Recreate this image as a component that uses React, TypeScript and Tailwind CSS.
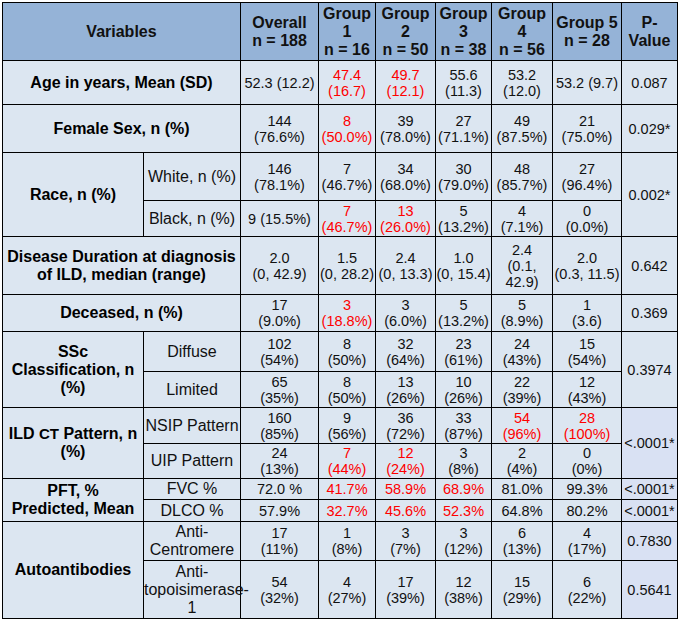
type Cell = {
  lines: string[];
  red?: boolean;
  alt?: boolean;
};

const c = (text: string, red = false): Cell => ({ lines: text.split("|"), red });

const DataCell = ({ cell, rowSpan }: { cell: Cell; rowSpan?: number }) => (
  <td
    rowSpan={rowSpan}
    className={`border border-black text-center align-middle whitespace-nowrap overflow-hidden px-0 text-[14.5px] leading-[16px] ${
      cell.red ? "text-[#ff0000]" : "text-[#111]"
    } ${cell.alt ? "bg-[#d9e1f3]" : ""}`}
  >
    {cell.lines.map((l, i) => (
      <div key={i}>{l}</div>
    ))}
  </td>
);

const Label = ({
  children,
  colSpan,
  rowSpan,
}: {
  children: React.ReactNode;
  colSpan?: number;
  rowSpan?: number;
}) => (
  <td
    colSpan={colSpan}
    rowSpan={rowSpan}
    className="border border-black text-center align-middle font-bold text-[16px] leading-[18px] whitespace-nowrap px-0"
  >
    {children}
  </td>
);

const Sub = ({ children }: { children: React.ReactNode }) => (
  <td className="border border-black text-center align-middle text-[16px] leading-[18px] whitespace-nowrap px-0 text-[#111]">
    {children}
  </td>
);

const groups = (cells: Cell[]) => cells.map((cell, i) => <DataCell key={i} cell={cell} />);

const pv = (text: string, alt = false): Cell => ({ lines: [text], alt });

export default function App() {
  return (
    <div className="w-[678px] h-[622px] bg-white pl-[2px] pt-[2px] overflow-hidden font-['Liberation_Sans',Arial,sans-serif]">
      <table className="table-fixed border-collapse w-[675px] bg-[#dce6f1]">
        <colgroup>
          <col className="w-[141px]" />
          <col className="w-[97px]" />
          <col className="w-[78px]" />
          <col className="w-[57px]" />
          <col className="w-[60px]" />
          <col className="w-[56px]" />
          <col className="w-[61px]" />
          <col className="w-[69px]" />
          <col className="w-[56px]" />
        </colgroup>
        <thead>
          <tr className="h-[58px] bg-[#95b3d7] font-bold text-[16px] leading-[18px] text-[#111]">
            <td colSpan={2} className="border border-black text-center align-middle">Variables</td>
            <td className="border border-black text-center align-middle">Overall<br />n = 188</td>
            <td className="border border-black text-center align-middle whitespace-nowrap">Group<br />1<br />n = 16</td>
            <td className="border border-black text-center align-middle whitespace-nowrap">Group<br />2<br />n = 50</td>
            <td className="border border-black text-center align-middle whitespace-nowrap">Group<br />3<br />n = 38</td>
            <td className="border border-black text-center align-middle whitespace-nowrap">Group<br />4<br />n = 56</td>
            <td className="border border-black text-center align-middle whitespace-nowrap">Group 5<br />n = 28</td>
            <td className="border border-black text-center align-middle">P-<br />Value</td>
          </tr>
        </thead>
        <tbody>
          <tr className="h-[44px]">
            <Label colSpan={2}>Age in years, Mean (SD)</Label>
            {groups([c("52.3 (12.2)"), c("47.4|(16.7)", true), c("49.7|(12.1)", true), c("55.6|(11.3)"), c("53.2|(12.0)"), c("53.2 (9.7)"), pv("0.087")])}
          </tr>
          <tr className="h-[48px]">
            <Label colSpan={2}>Female Sex, n (%)</Label>
            {groups([c("144|(76.6%)"), c("8|(50.0%)", true), c("39|(78.0%)"), c("27|(71.1%)"), c("49|(87.5%)"), c("21|(75.0%)"), pv("0.029*")])}
          </tr>
          <tr className="h-[48px]">
            <Label rowSpan={2}>Race, n (%)</Label>
            <Sub>White, n (%)</Sub>
            {groups([c("146|(78.1%)"), c("7|(46.7%)"), c("34|(68.0%)"), c("30|(79.0%)"), c("48|(85.7%)"), c("27|(96.4%)")])}
            <DataCell rowSpan={2} cell={pv("0.002*")} />
          </tr>
          <tr className="h-[36px]">
            <Sub>Black, n (%)</Sub>
            {groups([c("9 (15.5%)"), c("7|(46.7%)", true), c("13|(26.0%)", true), c("5|(13.2%)"), c("4|(7.1%)"), c("0|(0.0%)")])}
          </tr>
          <tr className="h-[58px]">
            <Label colSpan={2}>
              Disease Duration at diagnosis
              <br />
              of ILD, median (range)
            </Label>
            {groups([c("2.0|(0, 42.9)"), c("1.5|(0, 28.2)"), c("2.4|(0, 13.3)"), c("1.0|(0, 15.4)"), c("2.4|(0.1,|42.9)"), c("2.0|(0.3, 11.5)"), pv("0.642")])}
          </tr>
          <tr className="h-[37px]">
            <Label colSpan={2}>Deceased, n (%)</Label>
            {groups([c("17|(9.0%)"), c("3|(18.8%)", true), c("3|(6.0%)"), c("5|(13.2%)"), c("5|(8.9%)"), c("1|(3.6)"), pv("0.369")])}
          </tr>
          <tr className="h-[40px]">
            <Label rowSpan={2}>
              SSc
              <br />
              Classification, n
              <br />
              (%)
            </Label>
            <Sub>Diffuse</Sub>
            {groups([c("102|(54%)"), c("8|(50%)"), c("32|(64%)"), c("23|(61%)"), c("24|(43%)"), c("15|(54%)")])}
            <DataCell rowSpan={2} cell={pv("0.3974")} />
          </tr>
          <tr className="h-[36px]">
            <Sub>Limited</Sub>
            {groups([c("65|(35%)"), c("8|(50%)"), c("13|(26%)"), c("10|(26%)"), c("22|(39%)"), c("12|(43%)")])}
          </tr>
          <tr className="h-[36px]">
            <Label rowSpan={2}>
              ILD <span className="text-[15px]">CT</span> Pattern, n
              <br />
              (%)
            </Label>
            <Sub>NSIP Pattern</Sub>
            {groups([c("160|(85%)"), c("9|(56%)"), c("36|(72%)"), c("33|(87%)"), c("54|(96%)", true), c("28|(100%)", true)])}
            <DataCell rowSpan={2} cell={pv("<.0001*", true)} />
          </tr>
          <tr className="h-[35px]">
            <Sub>UIP Pattern</Sub>
            {groups([c("24|(13%)"), c("7|(44%)", true), c("12|(24%)", true), c("3|(8%)"), c("2|(4%)"), c("0|(0%)")])}
          </tr>
          <tr className="h-[21px]">
            <Label rowSpan={2}>
              PFT, %
              <br />
              Predicted, Mean
            </Label>
            <Sub>FVC %</Sub>
            {groups([c("72.0 %"), c("41.7%", true), c("58.9%", true), c("68.9%", true), c("81.0%"), c("99.3%"), pv("<.0001*", true)])}
          </tr>
          <tr className="h-[22px]">
            <Sub>DLCO %</Sub>
            {groups([c("57.9%"), c("32.7%", true), c("45.6%", true), c("52.3%", true), c("64.8%"), c("80.2%"), pv("<.0001*", true)])}
          </tr>
          <tr className="h-[39px]">
            <Label rowSpan={2}>Autoantibodies</Label>
            <Sub>
              Anti-
              <br />
              Centromere
            </Sub>
            {groups([c("17|(11%)"), c("1|(8%)"), c("3|(7%)"), c("3|(12%)"), c("6|(13%)"), c("4|(17%)"), pv("0.7830", true)])}
          </tr>
          <tr className="h-[58px]">
            <Sub>
              Anti-
              <br />
              topoisimerase-
              <br />1
            </Sub>
            {groups([c("54|(32%)"), c("4|(27%)"), c("17|(39%)"), c("12|(38%)"), c("15|(29%)"), c("6|(22%)"), pv("0.5641", true)])}
          </tr>
        </tbody>
      </table>
    </div>
  );
}
